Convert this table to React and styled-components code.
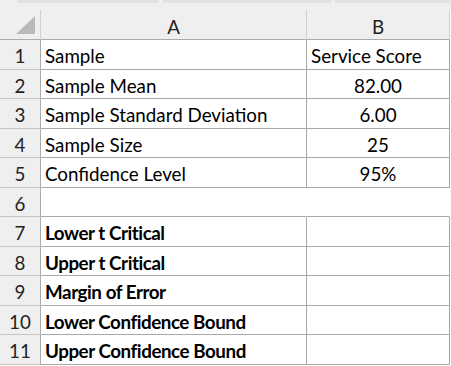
import React from "react";
import styled, { createGlobalStyle } from "styled-components";

const Global = createGlobalStyle`
  html, body { margin: 0; padding: 0; background: #ffffff; }
  body { font-family: Lato, "Liberation Sans", sans-serif; }
`;

const Page = styled.div`
  width: 451px;
  height: 366px;
  overflow: hidden;
  background: #ffffff;
`;

const TopEdge = styled.div`
  height: 10px;
  background: #efefef;
  display: flex;
  align-items: flex-start;
  gap: 4px;
  padding-left: 17px;
  box-sizing: border-box;
`;

const EdgeBox = styled.div`
  width: ${(p) => p.$w}px;
  height: 3px;
  background: #e2e2e2;
`;

const Sheet = styled.div`
  display: grid;
  grid-template-columns: 41px 266px 143px;
  font-family: Lato, "Liberation Sans", sans-serif;
  font-size: 18.8px;
  color: #000;
`;

const Corner = styled.div`
  position: relative;
  height: 29px;
  background: #efefef;
  border-right: 1px solid #cfcfcf;
  border-bottom: 1px solid #ababab;
`;

const Triangle = styled.div`
  position: absolute;
  right: 5px;
  bottom: 5px;
  width: 0;
  height: 0;
  border-left: 19px solid transparent;
  border-bottom: 18px solid #b9b9b9;
`;

const ColHead = styled.div`
  height: 26px;
  padding-top: 3px;
  background: #efefef;
  border-right: 1px solid #cfcfcf;
  border-bottom: 1px solid #ababab;
  display: flex;
  align-items: center;
  justify-content: center;
  color: #222;
`;

const RowHead = styled.div`
  height: ${(p) => p.$h}px;
  box-sizing: border-box;
  padding-top: 2px;
  background: #efefef;
  border-right: 1px solid #ababab;
  border-bottom: 1px solid #c4c4c4;
  display: flex;
  align-items: center;
  justify-content: center;
  color: #222;
`;

const Cell = styled.div`
  height: ${(p) => p.$h}px;
  box-sizing: border-box;
  border-right: 1px solid ${(p) => (p.$noRight ? "transparent" : "#a9a9a9")};
  border-bottom: 1px solid #a9a9a9;
  display: flex;
  align-items: center;
  justify-content: ${(p) => (p.$center ? "center" : "flex-start")};
  padding: 2px 0 0 ${(p) => (p.$center ? 0 : 4)}px;
  font-weight: ${(p) => (p.$bold ? 700 : 400)};
  letter-spacing: ${(p) => (p.$bold ? "-0.45px" : "0")};
  white-space: nowrap;
`;

const rows = [
  { n: 1, a: "Sample", b: "Service Score", bLeft: true },
  { n: 2, a: "Sample Mean", b: "82.00" },
  { n: 3, a: "Sample Standard Deviation", b: "6.00" },
  { n: 4, a: "Sample Size", b: "25" },
  { n: 5, a: "Confidence Level", b: "95%" },
  { n: 6, a: "", b: "", empty: true },
  { n: 7, a: "Lower t Critical", b: "", bold: true },
  { n: 8, a: "Upper t Critical", b: "", bold: true },
  { n: 9, a: "Margin of Error", b: "", bold: true },
  { n: 10, a: "Lower Confidence Bound", b: "", bold: true },
  { n: 11, a: "Upper Confidence Bound", b: "", bold: true },
];

export default function App() {
  return (
    <Page>
      <Global />
      <TopEdge>
        <EdgeBox $w={142} />
        <EdgeBox $w={168} />
        <EdgeBox $w={115} />
      </TopEdge>
      <Sheet>
        <Corner>
          <Triangle />
        </Corner>
        <ColHead>A</ColHead>
        <ColHead>B</ColHead>
        {rows.map((r, i) => {
          const h = i % 2 === 0 ? 30 : 29;
          return (
            <React.Fragment key={r.n}>
              <RowHead $h={h}>{r.n}</RowHead>
              <Cell $h={h} $bold={r.bold} $noRight={r.empty}>
                {r.a}
              </Cell>
              <Cell $h={h} $center={!r.bLeft} $noRight={r.empty}>
                {r.b}
              </Cell>
            </React.Fragment>
          );
        })}
      </Sheet>
    </Page>
  );
}
